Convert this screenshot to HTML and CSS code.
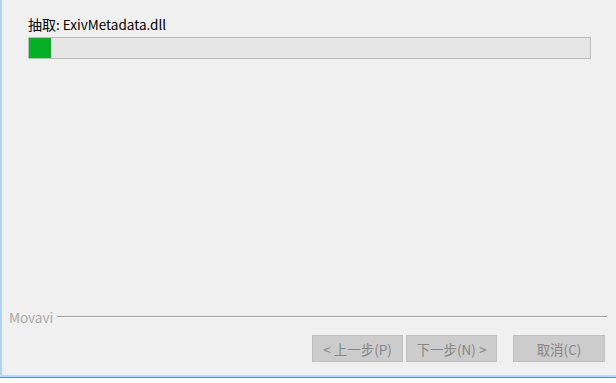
FILE: index.html
```html
<!DOCTYPE html>
<html lang="zh-CN">
<head>
<meta charset="utf-8">
<title>Movavi</title>
<link rel="stylesheet" href="styles.css">
</head>
<body>
<div class="window">
  <div class="content">
    <div class="label"><span class="cjk">抽取</span>: ExivMetadata.dll</div>
    <div class="progress"><div class="fill" style="width:22px"></div></div>
  </div>
  <div class="sep">
    <span class="brand">Movavi</span>
    <span class="rule"></span>
  </div>
  <div class="buttons">
    <button class="btn" disabled>&lt; 上一步(P)</button>
    <button class="btn" disabled>下一步(N) &gt;</button>
    <button class="btn cancel" disabled>取消(C)</button>
  </div>
  <div class="edge"></div>
</div>
</body>
</html>
```

FILE: styles.css
```css
html, body {
  margin: 0;
  padding: 0;
  background: #f0f0f0;
}
body {
  font-family: "Noto Sans CJK SC", "Noto Sans", sans-serif;
  font-size: 13px;
}
.window {
  width: 616px;
  height: 383px;
  box-sizing: border-box;
  border-left: 2px solid #a9d6f3;
  display: flex;
  flex-direction: column;
  background: #f0f0f0;
}
.content {
  flex: 1;
  padding: 16px 0 0 26px;
}
.label {
  font-size: 13.5px;
  line-height: 17px;
  color: #000;
}
.cjk {
  font-size: 14px;
}
.progress {
  margin-top: 4px;
  width: 563px;
  height: 22px;
  box-sizing: border-box;
  border: 1px solid #bcbcbc;
  background: #e6e6e6;
}
.fill {
  height: 100%;
  background: #06b025;
}
.sep {
  height: 16px;
  display: flex;
  align-items: center;
  padding-left: 7px;
  padding-right: 9px;
}
.brand {
  color: #a8a8a8;
  font-size: 13.5px;
  line-height: 16px;
}
.rule {
  flex: 1;
  margin-left: 4px;
  height: 0;
  border-top: 1px solid #a0a0a0;
  border-bottom: 1px solid #ffffff;
}
.buttons {
  display: flex;
  justify-content: flex-end;
  gap: 3px;
  padding: 10px 11px 13px 0;
}
.btn {
  width: 91px;
  height: 27px;
  box-sizing: border-box;
  border: 1px solid #bfbfbf;
  background: #cccccc;
  color: #868686;
  font-family: "Noto Sans CJK SC", "Noto Sans", sans-serif;
  font-size: 13.5px;
  padding: 0;
  margin: 0;
}
.cancel {
  margin-left: 13px;
  width: 92px;
}
.edge {
  height: 8px;
  box-sizing: border-box;
  margin-left: -2px;
  background: linear-gradient(to bottom, #b9dcf3 0, #b9dcf3 2px, #4f8fc6 2px, #4f8fc6 3px, #ffffff 3px);
}
```
